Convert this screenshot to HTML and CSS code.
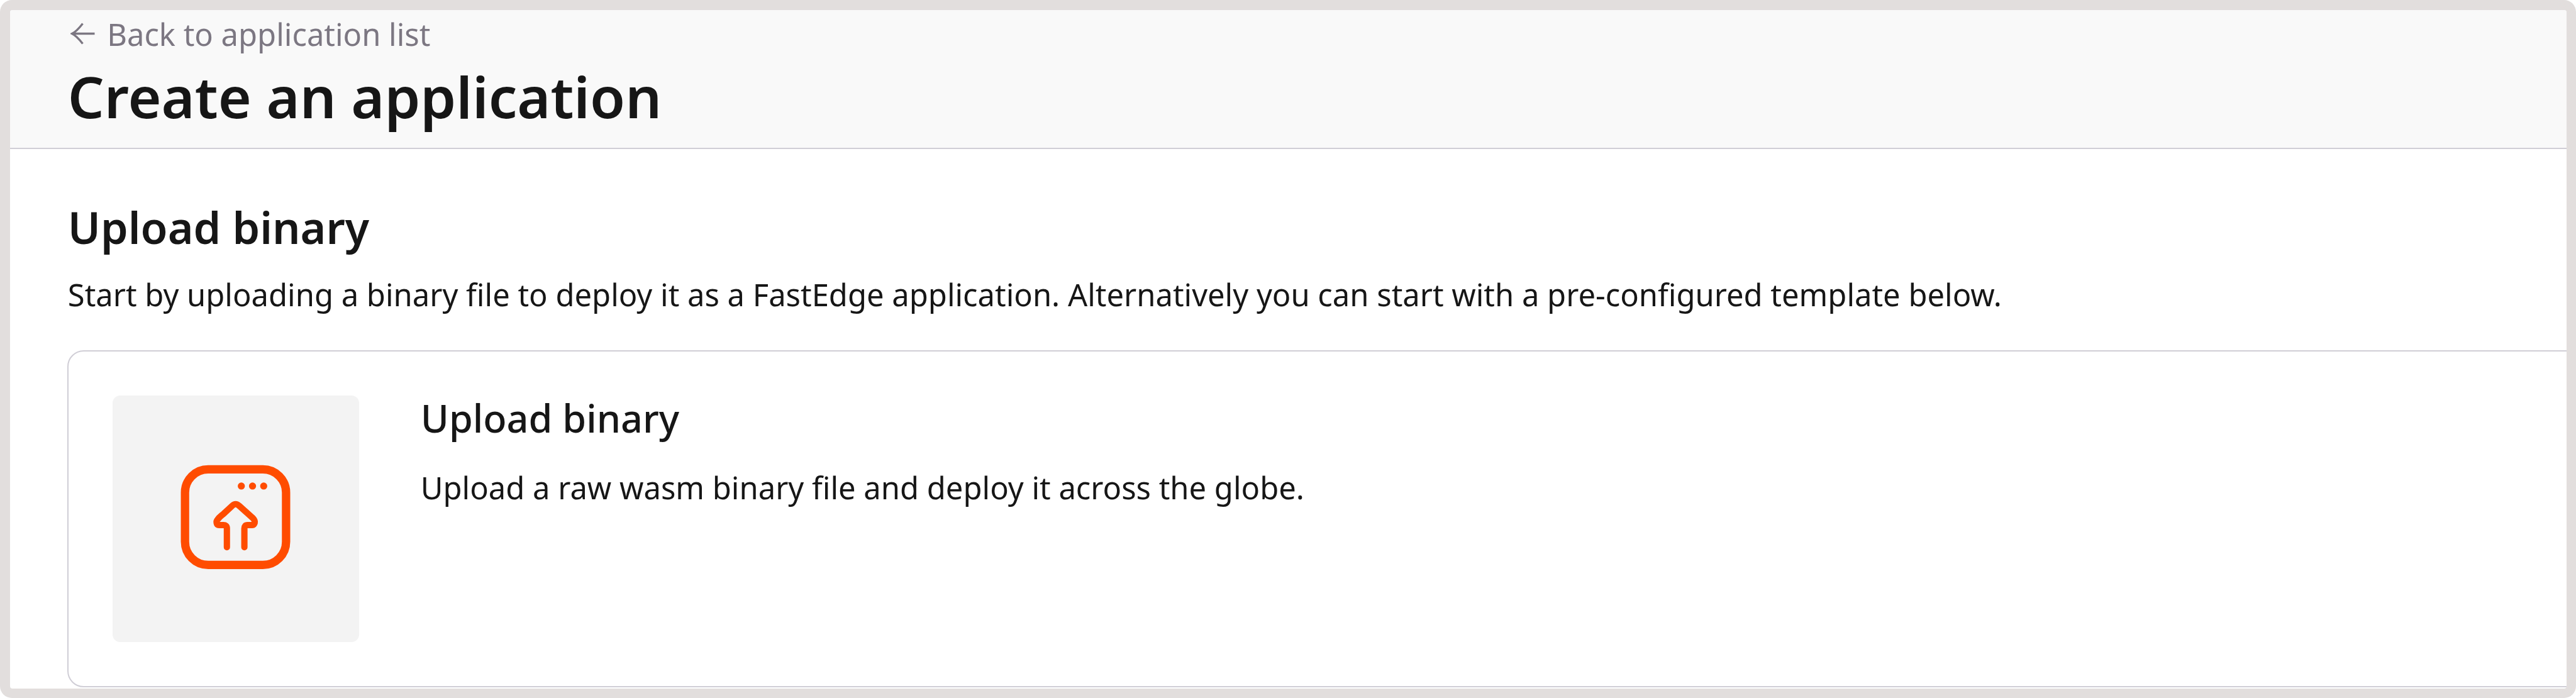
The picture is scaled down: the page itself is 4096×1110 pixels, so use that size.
FILE: index.html
```html
<!DOCTYPE html>
<html lang="en">
<head>
<meta charset="utf-8">
<title>Create an application</title>
<link rel="stylesheet" href="styles.css">
</head>
<body>
<div class="frame">
  <div class="page">
    <header class="header">
      <a class="back">
        <svg class="back-icon" viewBox="0 0 40 40"><path d="M39.5 20H3M20 3.5C15 10 9 17 2.5 20C9 23 15 30 20 36.500"/></svg>
        <span>Back to application list</span>
      </a>
      <h1 class="title">Create an application</h1>
    </header>
    <main class="main">
      <h2 class="section-title">Upload binary</h2>
      <p class="text">Start by uploading a binary file to deploy it as a FastEdge application. Alternatively you can start with a pre-configured template below.</p>
      <section class="card">
        <div class="thumb">
          <svg class="upload-icon" viewBox="48 30 600 600">
            <rect x="98" y="87" width="497" height="470" rx="114" stroke-width="41"/>
            <path stroke-width="31" d="M304 470V376Q304 361 287 361H265C252 361 250 343 258 334C267 321 278 314 288 305L330 266Q347 250 364 266L432 327C448 343 440 361 429 361H405Q390 361 390 377V470"/>
            <g class="dots"><circle cx="375" cy="169" r="17.500"/><circle cx="430" cy="169" r="17.500"/><circle cx="485" cy="169" r="17.500"/></g>
          </svg>
        </div>
        <div class="card-body">
          <h3 class="card-title">Upload binary</h3>
          <p class="text">Upload a raw wasm binary file and deploy it across the globe.</p>
        </div>
      </section>
    </main>
  </div>
</div>
</body>
</html>
```
FILE: styles.css
```css
* {
  box-sizing: border-box;
}

body {
  margin: 0;
  background: #fff;
  color: #161616;
  font-family: "Noto Sans", sans-serif;
}

h1, h2, h3, p {
  margin: 0;
}

.frame {
  width: 4096px;
  height: 1110px;
  padding: 15.5px;
  border-radius: 19px;
  background: #e2dedd;
}

.page {
  height: 1079px;
  border-radius: 4px;
  background: #fff;
  overflow: hidden;
}

.header {
  height: 221.5px;
  padding-left: 92.3px;
  background: #f9f9f9;
  border-bottom: 2px solid #d0ced6;
}

.back {
  display: flex;
  align-items: center;
  gap: 19.4px;
  height: 76px;
  color: #7c7782;
  font-size: 48.9px;
  line-height: 76px;
}

.back-icon {
  width: 39px;
  height: 39px;
  margin-left: 4px;
  fill: none;
  stroke: currentColor;
  stroke-width: 3.4;
}

.title {
  margin-top: 1.5px;
  font-size: 90.9px;
  font-weight: 600;
  line-height: 120px;
}

.main {
  padding: 76px 0 0 92.3px;
}

.section-title {
  margin-bottom: 22px;
  font-size: 69.9px;
  font-weight: 600;
  line-height: 96px;
}

.text {
  font-size: 48.92px;
  line-height: 74px;
  white-space: nowrap;
}

.card {
  display: flex;
  gap: 98px;
  width: 4060px;
  height: 536px;
  margin-top: 52px;
  margin-left: -1px;
  padding: 70px;
  border: 2px solid #d0ced6;
  border-radius: 26px;
}

.thumb {
  display: flex;
  align-items: center;
  justify-content: center;
  flex: none;
  width: 392px;
  height: 392px;
  border-radius: 12px;
  background: #f3f3f3;
}

.upload-icon {
  width: 194px;
  height: 194px;
  fill: none;
  stroke: #ff4c00;
  stroke-linecap: round;
  stroke-linejoin: round;
}

.dots {
  fill: #ff4c00;
  stroke: none;
}

.card-body {
  margin-top: -8px;
}

.card-title {
  margin-bottom: 29px;
  font-size: 61.1px;
  font-weight: 500;
  line-height: 88px;
}
```
